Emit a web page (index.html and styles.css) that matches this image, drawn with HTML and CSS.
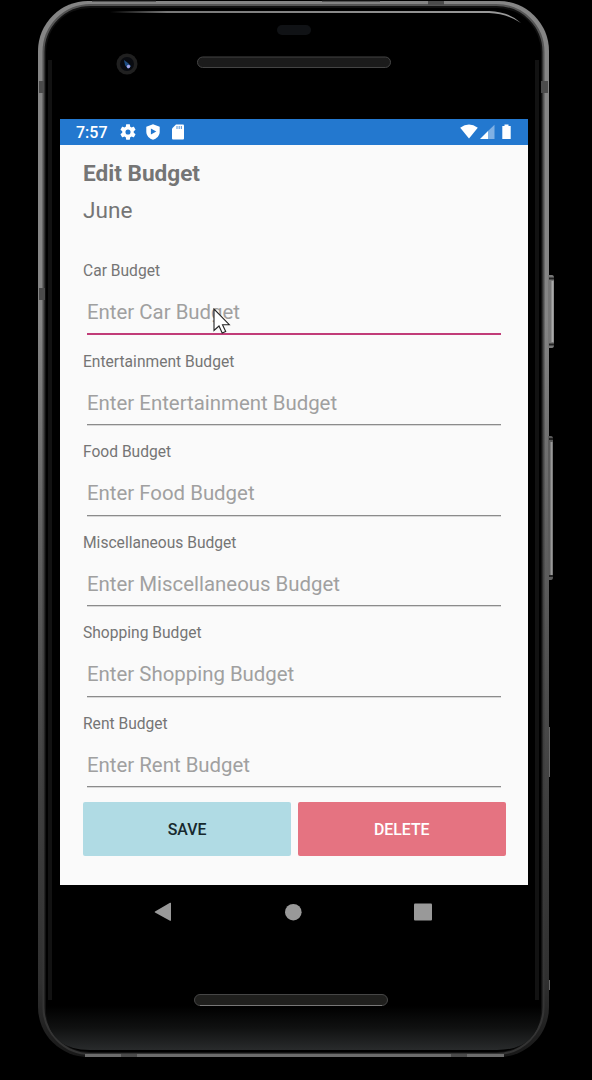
FILE: index.html
```html
<!DOCTYPE html>
<html lang="en">
<head>
<meta charset="utf-8">
<title>Edit Budget</title>
<link rel="stylesheet" href="styles.css">
</head>
<body>
<div class="device">
  <svg class="shell" width="592" height="1080" viewBox="0 0 592 1080" aria-hidden="true">
    <defs>
      <linearGradient id="edge" x1="0" y1="0" x2="0" y2="1">
        <stop offset="0" stop-color="#858585"/><stop offset=".3" stop-color="#858585"/>
        <stop offset=".5" stop-color="#626262"/><stop offset=".75" stop-color="#404040"/><stop offset=".93" stop-color="#303030"/><stop offset="1" stop-color="#181818"/>
      </linearGradient>
      <linearGradient id="rim" x1="0" y1="0" x2="0" y2="1">
        <stop offset="0" stop-color="#555"/><stop offset=".35" stop-color="#4a4a4a"/><stop offset="1" stop-color="#333"/>
      </linearGradient>
      <linearGradient id="chin" x1="0" y1="0" x2="0" y2="1">
        <stop offset="0" stop-color="#000"/><stop offset=".5" stop-color="#101111"/><stop offset="1" stop-color="#292b2c"/>
      </linearGradient>
      <linearGradient id="shine" x1="0" y1="0" x2="1" y2="0">
        <stop offset="0" stop-color="#000"/><stop offset=".15" stop-color="#777"/><stop offset="1" stop-color="#999"/>
      </linearGradient>
    </defs>
    <rect x="38" y="1" width="511" height="1056" rx="50" fill="url(#edge)"/>
    <rect x="43.5" y="5" width="500" height="1049" rx="47" fill="#111" stroke="url(#rim)" stroke-width="2"/>
    <rect x="46" y="8" width="495" height="1044" rx="44" fill="#000"/>
    <path d="M50 60V1000M537 60V1000" stroke="#121212" stroke-width="4"/>
    <path d="M46 1006h495q0 44-44 44H90q-44 0-44-44z" fill="url(#chin)"/>
    <rect x="85" y="1054" width="419" height="3" fill="#6c6c6c"/>
    <rect x="110" y="11" width="380" height="2" fill="url(#shine)"/>
    <path d="M489 11Q510 12 521 23Q508 14 489 13z" fill="#999"/>
    <g fill="#4b4b4b">
      <path d="M39 81h5v12h-5zM39 288h6v12h-6zM541 81h7v12h-7zM428 1h16v4h-16zM121 1054h16v3h-16zM451 1054h16v3h-16z"/>
    </g>
    <path d="M92 1h64M322 1h58" stroke="#222"/>
    <path d="M548 275h4q2 0 2 3v67q0 3-2 3h-4z" fill="#777"/>
    <path d="M552.500 281v61" stroke="#aaa" stroke-width="2"/>
    <path d="M549 278.500h5M549 344.500h5" stroke="#222" stroke-width="2"/>
    <path d="M548 436h3q2 0 2 3v138q0 3-2 3h-3z" fill="#5b5b5b"/>
    <path d="M551.500 442v133" stroke="#999" stroke-width="2"/>
    <path d="M549 439h4M549 576h4" stroke="#222" stroke-width="2"/>
    <path d="M549.500 727v50M549.500 980v10" stroke="#666"/>
    <rect x="277" y="25" width="34" height="10" rx="5" fill="#101215"/>
    <circle cx="127" cy="64" r="10.500" fill="#202020"/>
    <circle cx="127" cy="64" r="7" fill="#090b10"/>
    <path d="M124 60l4 3 3 3-3 3-3-4z" fill="#1d4d83"/>
    <circle cx="128.500" cy="66.500" r="1.700" fill="#a6a6e8"/>
    <rect x="197.500" y="57" width="193" height="10.500" rx="5.200" fill="#1b1b1b" stroke="#454545"/>
    <rect x="194.500" y="994.500" width="193" height="11" rx="5.500" fill="#1f1f1d" stroke="#464646"/>
    <path d="M200 1005.500h182" stroke="#777"/>
  </svg>

  <main class="screen">
    <header class="status">
      <span class="clock">7:57</span>
      <svg class="gear" width="16" height="16" viewBox="2 2 20 20"><path fill="#fff" d="M19.140 12.940c.04-.3.060-.61.060-.94s-.02-.64-.07-.94l2.030-1.580c.18-.14.230-.41.120-.61l-1.920-3.320c-.12-.22-.37-.29-.59-.22l-2.390.96c-.5-.38-1.030-.7-1.620-.94l-.36-2.540c-.04-.24-.24-.41-.48-.41h-3.840c-.24 0-.43.17-.47.410l-.36 2.540c-.59.240-1.130.57-1.620.94l-2.390-.96c-.22-.08-.47 0-.59.220L2.740 8.870c-.12.210-.08.470.12.610l2.030 1.580c-.05.3-.09.630-.09.940s.02.640.070.940l-2.030 1.580c-.18.140-.23.410-.12.610l1.920 3.320c.12.220.37.290.59.220l2.390-.96c.5.380 1.030.7 1.620.94l.36 2.540c.05.240.24.410.48.410h3.840c.24 0 .44-.17.470-.41l.36-2.540c.59-.24 1.130-.56 1.620-.94l2.390.96c.22.080.47 0 .59-.22l1.920-3.320c.12-.22.070-.47-.12-.61zM12 15.200a3.200 3.200 0 1 1 0-6.400 3.200 3.200 0 0 1 0 6.400z"/></svg>
      <svg class="shield" width="14" height="16" viewBox="0 0 14 16"><path fill="#fff" d="M7 .3l6.700 2.400v5C13.700 11.700 10.500 14.700 7 15.800 3.500 14.700.3 11.700.3 7.700v-5z"/><path fill="#2378cf" d="M4.900 4.600v6l5.400-3z"/></svg>
      <svg class="card" width="12" height="16" viewBox="0 0 12 16"><path fill="#fff" d="M4 .5h7q1 0 1 1v13q0 1-1 1H1q-1 0-1-1V4.500z"/><path stroke="#6aa3df" stroke-width="1.200" d="M5 2v3M7.200 2v3M9.400 2v3"/></svg>
      <svg class="radio" width="52" height="16" viewBox="0 0 52 16"><path fill="#fff" d="M.2 3.700Q9 -2.700 17.800 3.700L9 14.500z"/><path fill="#fff" d="M20 15l8-8v8z"/><path fill="#80b1e4" d="M28 7l6.500-6.300V15H28z"/><path fill="#fff" d="M42.300 2h2.200V.5h4V2h2.200v13h-8.400z"/></svg>
    </header>

    <form class="form">
      <h1 class="title">Edit Budget</h1>
      <p class="month">June</p>
      <div class="fields">
        <div class="field active"><span class="label">Car Budget</span><div class="entry">Enter Car Budget</div></div>
        <div class="field"><span class="label">Entertainment Budget</span><div class="entry">Enter Entertainment Budget</div></div>
        <div class="field"><span class="label">Food Budget</span><div class="entry">Enter Food Budget</div></div>
        <div class="field"><span class="label">Miscellaneous Budget</span><div class="entry">Enter Miscellaneous Budget</div></div>
        <div class="field"><span class="label">Shopping Budget</span><div class="entry">Enter Shopping Budget</div></div>
        <div class="field"><span class="label">Rent Budget</span><div class="entry">Enter Rent Budget</div></div>
      </div>
      <div class="actions">
        <button class="button save" type="button">SAVE</button>
        <button class="button delete" type="button">DELETE</button>
      </div>
    </form>
  </main>

  <nav class="navbar">
    <svg width="18" height="20" viewBox="0 0 18 20"><path fill="#999" d="M17 1v17.500q-.5.500-1 .2L1 10.500q-.7-.5 0-1L16 .8q.7-.3 1 .2z"/></svg>
    <svg width="18" height="18" viewBox="0 0 18 18"><circle cx="9.300" cy="9.200" r="8.300" fill="#999"/></svg>
    <svg width="18" height="18" viewBox="0 0 18 18"><rect y=".5" width="18" height="17" rx="1" fill="#999"/></svg>
  </nav>

  <svg class="cursor" width="18" height="27" viewBox="0 0 18 27"><path d="M1 1v21.500l5-4.500 3.200 7 3.500-1.500-3.200-6.800h6.800z" fill="#fff" stroke="#222" stroke-width="1.100"/></svg>
</div>
</body>
</html>
```
FILE: styles.css
```css
* { box-sizing: border-box; }
body {
  margin: 0;
  background: #000;
  font-family: Roboto, sans-serif;
}
.device {
  position: relative;
  width: 592px;
  height: 1080px;
  padding: 119px 64px 0 60px;
  overflow: hidden;
}
.shell { position: absolute; left: 0; top: 0; }
.screen {
  position: relative;
  height: 766px;
  background: #fafafa;
}
.status {
  display: flex;
  align-items: center;
  height: 26px;
  padding: 0 16px;
  background: #2378cf;
  color: #fff;
}
.clock { width: 44px; padding-top: 1px; font-size: 16px; font-weight: 500; line-height: 26px; }
.gear { margin-right: 10px; }
.shield { margin-right: 12px; }
.radio { margin-left: auto; }
.form { padding: 14px 23px 0; }
.title {
  margin: 0;
  color: #757575;
  font-size: 22.600px;
  font-weight: 700;
  line-height: 30px;
}
.month {
  margin: 7px 0 0;
  color: #757575;
  font-size: 22.600px;
  line-height: 30px;
}
.fields { padding-top: 34px; }
.field { height: 90.500px; }
.label {
  display: block;
  color: #757575;
  font-size: 15.600px;
  line-height: 22px;
}
.entry {
  height: 52.500px;
  margin: 0 4px;
  padding-top: 16px;
  border-bottom: 1px solid #8b8b8b;
  box-shadow: 0 1px #d8d8d8;
  color: #a0a0a0;
  font-size: 20.400px;
  line-height: 28px;
}
.active .entry {
  border-bottom: 2px solid #c13c78;
  box-shadow: none;
}
.actions {
  display: grid;
  grid-template-columns: 208px 207.500px;
  gap: 7px;
  margin-top: -1px;
}
.button {
  height: 53.500px;
  padding: 1px 0 0;
  border: 0;
  border-radius: 2px;
  font: 500 15.900px/53px Roboto, sans-serif;
}
.save { background: #b0dbe4; color: #17292d; }
.delete { background: #e57381; color: #fff; }
.navbar {
  position: relative;
  display: flex;
  align-items: center;
  justify-content: space-between;
  height: 54px;
  padding: 0 96px 0 94px;
}
.cursor { position: absolute; left: 213px; top: 308px; }
```
